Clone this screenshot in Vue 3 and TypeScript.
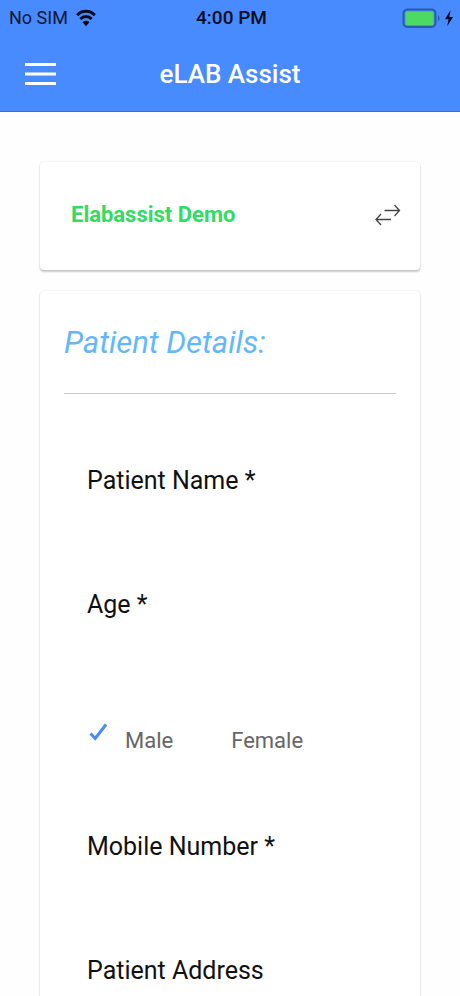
<script setup lang="ts">
import { reactive, ref } from 'vue'

type Gender = 'Male' | 'Female'

const genders: Gender[] = ['Male', 'Female']
const lab = ref('Elabassist Demo')
const patient = reactive({
  name: '',
  age: '',
  gender: 'Male' as Gender,
  mobile: '',
  address: '',
})
</script>

<template>
  <div class="app">
    <header class="top">
      <div class="status">
        <div class="carrier">
          <span>No SIM</span>
          <svg class="wifi" viewBox="0 0 20 18" aria-hidden="true">
            <path d="M1.2 6.2C6 1 14 1 18.8 6.2" />
            <path d="M4.4 10C7.6 6.6 12.4 6.6 15.6 10" />
            <path class="dot" d="M6.6 13.2C8.4 11.2 11.6 11.2 13.4 13.2L10 17.2Z" />
          </svg>
        </div>
        <span class="clock">4:00 PM</span>
        <div class="power">
          <svg class="battery" viewBox="0 0 52 20" aria-hidden="true">
            <rect class="shell" x="1.5" y="1.5" width="32" height="17.5" rx="4" />
            <rect class="charge" x="3.5" y="3.5" width="28" height="13.5" rx="1.5" />
            <path class="cap" d="M36 7.2C38 7.9 38 12.6 36 13.3Z" />
            <path class="bolt" d="M48.6 2L43 11.2H46.6L45.2 18.2L51 8.9H47.3Z" />
          </svg>
        </div>
      </div>
      <nav class="bar">
        <button class="menu" type="button" aria-label="Menu">
          <svg viewBox="0 0 32 24" aria-hidden="true">
            <path d="M0 2.5H31M0 12H31M0 21.5H31" />
          </svg>
        </button>
        <h1>eLAB Assist</h1>
      </nav>
    </header>

    <main class="content">
      <section class="card lab">
        <h2>{{ lab }}</h2>
        <button class="swap" type="button" aria-label="Switch lab">
          <svg viewBox="0 0 26 22" aria-hidden="true">
            <path d="M9.5 6.5H24.5M19.5 1L24.5 6.5L19.5 12" />
            <path d="M16 15.5H1M6 10L1 15.5L6 21" />
          </svg>
        </button>
      </section>

      <form class="card details" @submit.prevent>
        <h2>Patient Details:</h2>
        <div class="fields">
          <div class="field">
            <label for="name">Patient Name *</label>
            <input id="name" v-model="patient.name" type="text" />
          </div>
          <div class="field">
            <label for="age">Age *</label>
            <input id="age" v-model="patient.age" type="text" inputmode="numeric" />
          </div>
          <div class="genders" role="radiogroup" aria-label="Gender">
            <label v-for="g in genders" :key="g" class="gender">
              <input v-model="patient.gender" type="radio" name="gender" :value="g" />
              <svg viewBox="0 0 20 20" aria-hidden="true">
                <path d="M3.5 10.5L8.2 15.5L19 1.5" />
              </svg>
              <span>{{ g }}</span>
            </label>
          </div>
          <div class="field">
            <label for="mobile">Mobile Number *</label>
            <input id="mobile" v-model="patient.mobile" type="tel" />
          </div>
          <div class="field">
            <label for="address">Patient Address</label>
            <input id="address" v-model="patient.address" type="text" />
          </div>
        </div>
      </form>
    </main>
  </div>
</template>

<style>
body {
  margin: 0;
  background: #fefefe;
}
</style>

<style scoped>
.app {
  display: flex;
  flex-direction: column;
  height: 100vh;
  font-family: Roboto, 'Liberation Sans', sans-serif;
  color: #111;
}

button {
  padding: 0;
  border: 0;
  background: none;
  cursor: pointer;
}

svg {
  display: block;
  fill: none;
}

h1,
h2 {
  margin: 0;
}

.top {
  flex: none;
  background: #488aff;
  border-bottom: 1px solid #3a6fd0;
}

.status {
  display: grid;
  grid-template-columns: 1fr auto 1fr;
  align-items: center;
  height: 36px;
  padding: 0 6px 0 9px;
  font-size: 18px;
  line-height: 36px;
  color: #0a1630;
}

.carrier {
  display: flex;
  align-items: center;
  gap: 8px;
}

.clock {
  font-size: 19px;
  font-weight: 500;
  color: #060d1e;
}

.wifi {
  width: 20px;
  height: 18px;
  stroke: #050b18;
  stroke-width: 3;
}

.wifi .dot {
  fill: #050b18;
  stroke: none;
}

.power {
  justify-self: end;
}

.battery {
  width: 52px;
  height: 20px;
}

.shell {
  stroke: #2b5ba8;
  stroke-width: 2;
}

.charge {
  fill: #4cd964;
}

.cap {
  fill: #2b5ba8;
}

.bolt {
  fill: #050b18;
}

.bar {
  display: grid;
  grid-template-columns: 1fr auto 1fr;
  align-items: center;
  height: 75px;
  padding: 0 25px;
}

.menu {
  justify-self: start;
}

.menu svg {
  width: 32px;
  height: 24px;
  stroke: #fff;
  stroke-width: 3;
}

h1 {
  font-size: 26px;
  font-weight: 500;
  line-height: 36px;
  color: #fff;
}

.content {
  flex: 1;
  min-height: 0;
  overflow-y: auto;
  scrollbar-width: none;
  padding: 50px 40px 20px;
}

.card {
  border-radius: 4px;
  background: #fff;
  box-shadow: 0 2px 2px rgba(0, 0, 0, 0.2), 0 0 2px rgba(0, 0, 0, 0.12);
}

.lab {
  display: flex;
  align-items: center;
  justify-content: space-between;
  height: 108px;
  box-sizing: border-box;
  padding: 0 19px 3px 31px;
  margin-bottom: 21px;
}

.lab h2 {
  font-size: 22px;
  font-weight: 700;
  line-height: 32px;
  color: #32db64;
}

.swap svg {
  width: 26px;
  height: 22px;
  stroke: #444;
  stroke-width: 1.3;
}

.details {
  padding: 24px;
}

.details h2 {
  padding: 8px 0 30px;
  border-bottom: 1px solid #ccc;
  font-size: 31px;
  font-style: italic;
  font-weight: 400;
  line-height: 40px;
  color: #63b8fb;
}

.fields {
  padding: 69px 23px 0;
}

.field {
  display: flex;
  flex-direction: column;
  height: 124px;
  font-size: 25px;
}

.field label {
  line-height: 36px;
}

.field input {
  height: 48px;
  padding: 0;
  border: 0;
  outline: 0;
  background: transparent;
  font: inherit;
  color: inherit;
}

.genders {
  display: flex;
  gap: 20px;
  height: 118px;
}

.gender {
  position: relative;
  display: flex;
  gap: 18px;
  align-self: flex-start;
  padding: 12px 0;
  font-size: 22px;
  line-height: 36px;
  color: #666;
  cursor: pointer;
}

.gender input {
  position: absolute;
  inset: 0;
  width: 100%;
  height: 100%;
  margin: 0;
  opacity: 0;
  cursor: pointer;
}

.gender svg {
  width: 20px;
  height: 20px;
  stroke: #488aff;
  stroke-width: 3;
  visibility: hidden;
}

.gender input:checked + svg {
  visibility: visible;
}
</style>
